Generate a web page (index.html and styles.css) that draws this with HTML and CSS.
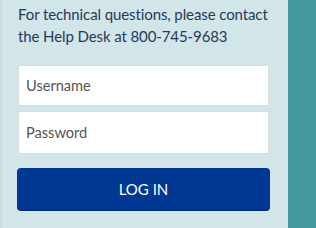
FILE: index.html
```html
<!DOCTYPE html>
<html lang="en">
<head>
    <meta charset="UTF-8">
    <meta name="viewport" content="width=device-width, initial-scale=1.0">
    <title>Log In</title>
    <link rel="stylesheet" href="styles.css">
</head>
<body>
    <div class="login-panel">
        <p class="help-text">For technical questions, please contact the Help Desk at 800-745-9683</p>
        <form class="login-form">
            <input type="text" class="field" placeholder="Username">
            <input type="password" class="field" placeholder="Password">
            <button type="submit" class="login-btn">LOG IN</button>
        </form>
    </div>
    <div class="side-strip"></div>
</body>
</html>
```

FILE: styles.css
```css
body {
    margin: 0;
    height: 228px;
    display: flex;
    font-family: Lato, "Open Sans", sans-serif;
    overflow: hidden;
}

.login-panel {
    width: 288px;
    box-sizing: border-box;
    padding: 3px 18px 0 17px;
    background-color: #d2e5e8;
    box-shadow: inset 3px 0 3px -2px rgba(0, 0, 0, 0.08);
}

.help-text {
    margin: 0 0 0 1px;
    font-size: 15px;
    letter-spacing: -0.1px;
    line-height: 22px;
    color: #1f3b5c;
}

.login-form {
    display: flex;
    flex-direction: column;
    margin-top: 18px;
}

.field {
    height: 41px;
    margin: 0 1px 5px 1px;
    padding: 0 7px;
    border: 1px solid #dcdcdc;
    background: white;
    font-family: inherit;
    font-size: 14.6px;
    color: #333;
    box-sizing: border-box;
}

.field + .field {
    height: 43px;
    margin-bottom: 14px;
}

.field::placeholder {
    color: #555;
}

.login-btn {
    height: 43px;
    background-color: #003893;
    border: none;
    border-bottom: 2px solid #012f78;
    border-radius: 4px;
    color: white;
    font-family: inherit;
    font-size: 15px;
    cursor: pointer;
}

.side-strip {
    flex: 1;
    background-color: #45999f;
}
```
